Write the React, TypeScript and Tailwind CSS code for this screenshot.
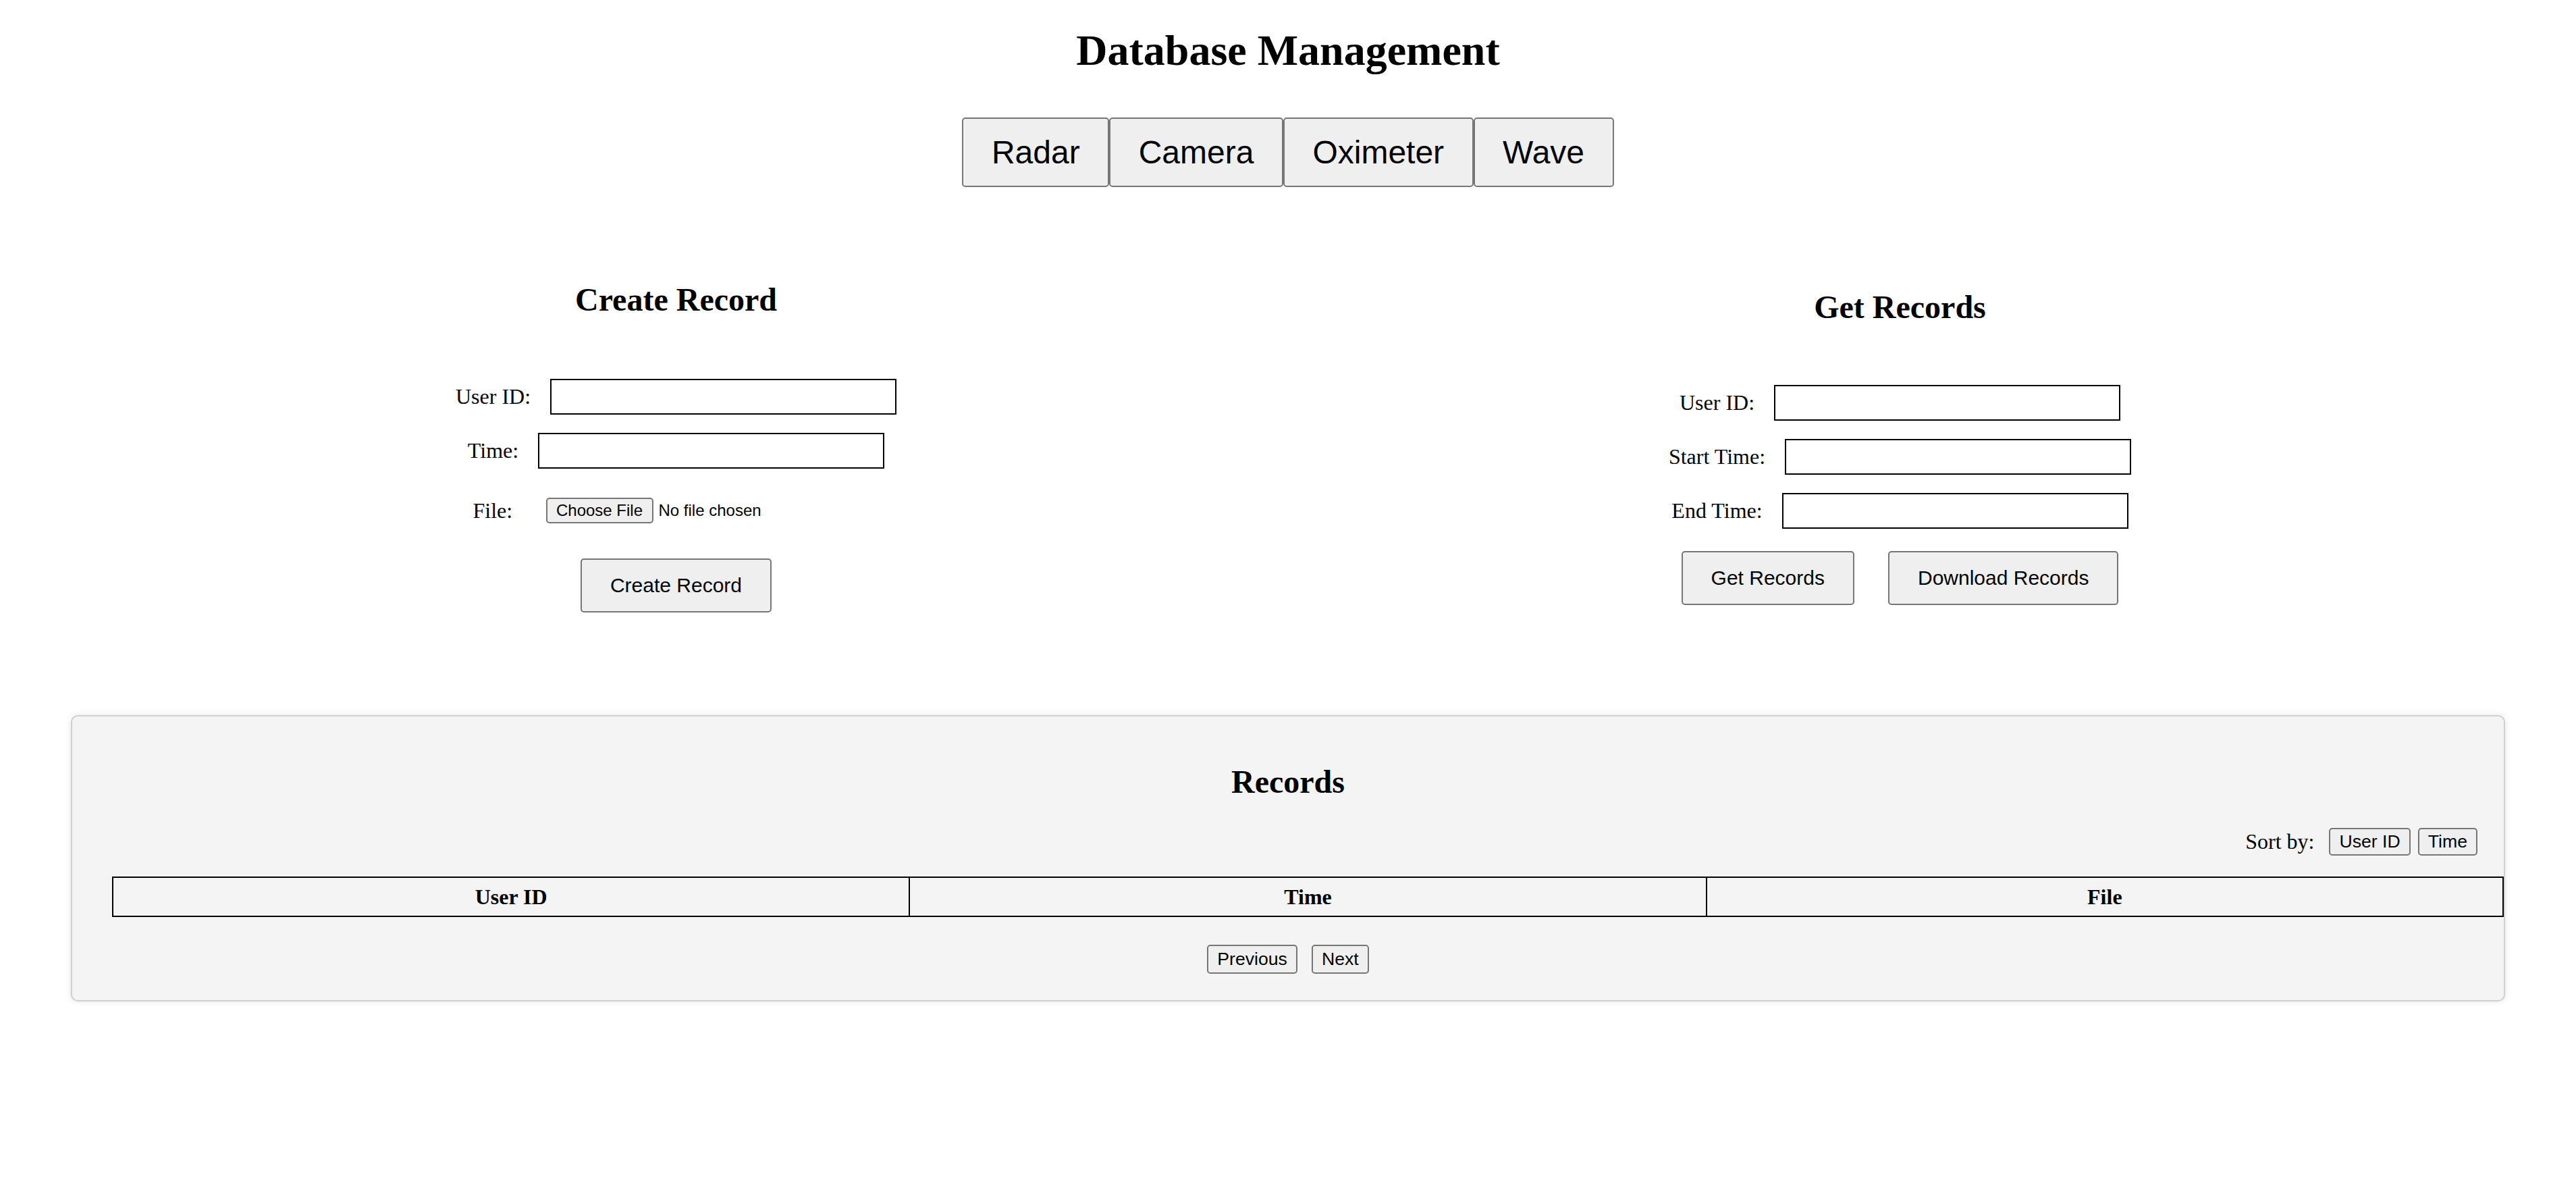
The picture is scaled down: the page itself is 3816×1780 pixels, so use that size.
import React from 'react';

const serif = "font-['Liberation_Serif','Times_New_Roman',serif]";
const sans = "font-['Liberation_Sans',Arial,sans-serif]";

const tabs = ['Radar', 'Camera', 'Oximeter', 'Wave'];

// default-looking browser button, sized for the 2x screenshot
const GrayButton: React.FC<{ className?: string; children: React.ReactNode }> = ({ className = '', children }) => (
  <button
    type="button"
    className={`${sans} bg-[#efefef] text-black border-2 border-[#767676] rounded-[5px] leading-none flex items-center justify-center ${className}`}
  >
    {children}
  </button>
);

const FieldRow: React.FC<{ label: string; className?: string }> = ({ label, className = '' }) => (
  <div className={`flex items-center gap-[29px] ${className}`}>
    <label className="text-[32px] leading-[37px] whitespace-nowrap">{label}</label>
    <input type="text" className="w-[513px] h-[53px] border-2 border-black bg-white outline-none" />
  </div>
);

export default function App() {
  return (
    <div className={`${serif} min-h-screen bg-white text-black pt-[38px]`}>
      {/* Title */}
      <h1 className="text-[64px] leading-[73px] font-bold text-center">Database Management</h1>

      {/* Tabs */}
      <div className="flex justify-center mt-[63px]">
        {tabs.map((t) => (
          <GrayButton key={t} className="h-[103px] px-[41.5px] text-[48px] rounded-[4px]">
            {t}
          </GrayButton>
        ))}
      </div>

      {/* Forms */}
      <div className="w-[3626px] mx-auto mt-[139px] flex items-center">
        {/* Create Record */}
        <div className="flex-1 flex flex-col items-center">
          <h2 className="text-[48px] leading-[55px] font-bold">Create Record</h2>
          <FieldRow label="User ID:" className="mt-[90px]" />
          <FieldRow label="Time:" className="mt-[27px]" />
          <div className="flex items-center mt-[43px] h-[38px]">
            <label className="text-[32px] leading-[37px] w-[58px]">File:</label>
            <div className="ml-[50px] w-[494px] flex items-center">
              <GrayButton className="h-[38px] w-[159px] text-[24px]">Choose File</GrayButton>
              <span className={`${sans} text-[24px] ml-[8px]`}>No file chosen</span>
            </div>
          </div>
          <GrayButton className="mt-[52px] h-[80px] px-[42px] text-[30px]">Create Record</GrayButton>
        </div>

        {/* Get Records */}
        <div className="flex-1 flex flex-col items-center">
          <h2 className="text-[48px] leading-[55px] font-bold">Get Records</h2>
          <FieldRow label="User ID:" className="mt-[88px]" />
          <FieldRow label="Start Time:" className="mt-[27px]" />
          <FieldRow label="End Time:" className="mt-[27px]" />
          <div className="flex gap-[50px] mt-[33px]">
            <GrayButton className="h-[80px] px-[42px] text-[30px]">Get Records</GrayButton>
            <GrayButton className="h-[80px] px-[42px] text-[30px]">Download Records</GrayButton>
          </div>
        </div>
      </div>

      {/* Records panel */}
      <div className="w-[3606px] mx-auto mt-[152px] bg-[#f4f4f4] border-2 border-[#d0d0d0] rounded-[10px] shadow-[0_0_10px_rgba(0,0,0,0.1)] pt-[69px] pb-[39px]">
        <h2 className="text-[48px] leading-[55px] font-bold text-center">Records</h2>

        <div className="flex justify-end items-center mt-[41px] pr-[39px] h-[41px]">
          <span className="text-[32px] leading-[37px] mr-[22px]">Sort by:</span>
          <GrayButton className="h-[41px] px-[13px] text-[26.67px]">User ID</GrayButton>
          <GrayButton className="h-[41px] px-[13px] text-[26.67px] ml-[11px]">Time</GrayButton>
        </div>

        <div className="pl-[59px] mt-[31px]">
          <table className="w-full border-collapse border-2 border-black table-fixed">
            <thead>
              <tr>
                <th className="border-2 border-black h-[58px] p-0 text-[32px] font-bold">User ID</th>
                <th className="border-2 border-black h-[58px] p-0 text-[32px] font-bold">Time</th>
                <th className="border-2 border-black h-[58px] p-0 text-[32px] font-bold">File</th>
              </tr>
            </thead>
            <tbody />
          </table>
        </div>

        <div className="flex justify-center gap-[21px] mt-[41px]">
          <GrayButton className="h-[43px] px-[13px] text-[26.67px]">Previous</GrayButton>
          <GrayButton className="h-[43px] px-[13px] text-[26.67px]">Next</GrayButton>
        </div>
      </div>
    </div>
  );
}
